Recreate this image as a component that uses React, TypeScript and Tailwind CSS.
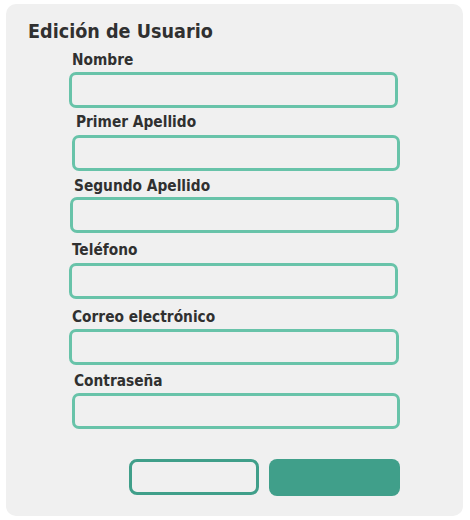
const fields = [
  { label: 'Nombre', type: 'text', labelCls: 'mt-[7px] ml-[66px]', boxCls: 'mt-[3px] ml-[63px] w-[329px]' },
  { label: 'Primer Apellido', type: 'text', labelCls: 'mt-[5px] ml-[70px]', boxCls: 'mt-[4px] ml-[66px] w-[328px]' },
  { label: 'Segundo Apellido', type: 'text', labelCls: 'mt-[6px] ml-[68px]', boxCls: 'mt-[2px] ml-[64px] w-[329px]' },
  { label: 'Teléfono', type: 'tel', labelCls: 'mt-[8px] ml-[66px]', boxCls: 'mt-[4px] ml-[63px] w-[329px]' },
  { label: 'Correo electrónico', type: 'email', labelCls: 'mt-[9px] ml-[66px]', boxCls: 'mt-[3px] ml-[63px] w-[330px]' },
  { label: 'Contraseña', type: 'password', labelCls: 'mt-[7px] ml-[68px]', boxCls: 'mt-[3px] ml-[66px] w-[328px]' },
];

export default function App() {
  return (
    <div className="min-h-screen bg-white pt-[4px] pl-[6px] pr-[7px] font-['DejaVu_Sans_Condensed','DejaVu_Sans',sans-serif]">
      <form
        className="h-[512px] rounded-[10px] bg-[#f0f0f0] pt-[16px] flex flex-col items-start"
        onSubmit={(e) => e.preventDefault()}
      >
        <h2 className="ml-[22px] text-[19.6px] leading-[24px] font-bold text-[#303030]">Edición de Usuario</h2>

        {fields.map((f) => (
          <div key={f.label} className="contents">
            <label className={`block text-[15.3px] leading-[18px] font-bold text-[#303030] ${f.labelCls}`}>{f.label}</label>
            <input
              type={f.type}
              className={`block h-[36px] rounded-[7px] border-[3px] border-[#68c3a9] bg-transparent px-2 text-[15px] outline-none ${f.boxCls}`}
            />
          </div>
        ))}

        <div className="mt-[30px] ml-[123px] flex gap-[10px]">
          <button type="button" className="h-[36px] w-[130px] rounded-[8px] border-[3px] border-[#409f8a] bg-transparent" />
          <button type="submit" className="h-[37px] w-[131px] rounded-[8px] bg-[#409f8a]" />
        </div>
      </form>
    </div>
  );
}
